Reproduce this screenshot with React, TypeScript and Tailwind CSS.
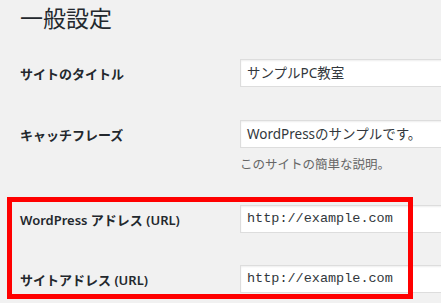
const sans = 'font-["Segoe_UI","Noto_Sans","Noto_Sans_CJK_JP",sans-serif]'

const Field = ({ value, mono }: { value: string; mono?: boolean }) => (
  <div
    className={`h-[28px] w-[360px] shrink-0 border border-[#dddddd] bg-white pl-[6px] flex items-center text-[#32373c] shadow-[inset_0_1px_2px_rgba(0,0,0,0.07)] ${
      mono ? 'font-["Liberation_Mono",monospace] text-[13.5px]' : 'text-[13.5px]'
    }`}
  >
    {value}
  </div>
)

const Label = ({ children }: { children: string }) => (
  <div className="w-[220px] shrink-0 pt-[5px] text-[13px] leading-[20px] font-semibold">{children}</div>
)

const App = () => {
  return (
    <div className={`relative w-[441px] h-[303px] overflow-hidden bg-[#f1f1f1] text-[#23282d] ${sans}`}>
      <div className="pl-[20px]">
        <h1 className="mt-[4px] text-[23px] leading-[29px] font-normal">一般設定</h1>

        <div className="flex mt-[26px]">
          <Label>サイトのタイトル</Label>
          <Field value="サンプルPC教室" />
        </div>

        <div className="flex mt-[33px]">
          <Label>キャッチフレーズ</Label>
          <div>
            <Field value="WordPressのサンプルです。" />
            <p className="mt-[7px] text-[12.5px] leading-[20px] text-[#666666]">このサイトの簡単な説明。</p>
          </div>
        </div>

        <div className="flex mt-[30px]">
          <Label>WordPress アドレス (URL)</Label>
          <Field value="http://example.com" mono />
        </div>

        <div className="flex mt-[32px]">
          <Label>サイトアドレス (URL)</Label>
          <Field value="http://example.com" mono />
        </div>
      </div>

      {/* annotation box */}
      <div className="absolute left-[7px] top-[197px] w-[406px] h-[102px] border-[5px] border-[#ff0000] pointer-events-none" />
    </div>
  )
}

export default App
